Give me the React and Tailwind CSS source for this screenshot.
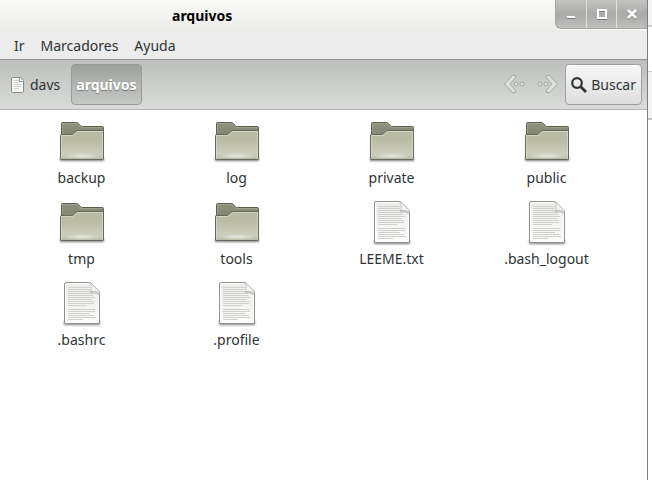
import React from 'react';

const entries = [
  { name: 'backup', type: 'folder' },
  { name: 'log', type: 'folder' },
  { name: 'private', type: 'folder' },
  { name: 'public', type: 'folder' },
  { name: 'tmp', type: 'folder' },
  { name: 'tools', type: 'folder' },
  { name: 'LEEME.txt', type: 'file' },
  { name: '.bash_logout', type: 'file' },
  { name: '.bashrc', type: 'file' },
  { name: '.profile', type: 'file' },
];

// y and length of each text line on the document icon
const textLines = [
  [7, 22], [9, 22], [11, 23], [13, 25], [15, 25], [17, 27], [19, 24], [21, 26], [23, 26], [25, 19],
  [29, 27], [31, 27], [33, 22], [35, 26], [37, 28], [39, 15],
];

const Gradients = () => (
  <svg className="absolute" width="0" height="0" aria-hidden="true">
    <defs>
      <linearGradient id="folderBack" x1="0" y1="0" x2="0" y2="1">
        <stop offset="0" stopColor="#8f927d" />
        <stop offset="1" stopColor="#7c7f6b" />
      </linearGradient>
      <linearGradient id="folderFront" x1="0" y1="0" x2="0" y2="1">
        <stop offset="0" stopColor="#b9bba5" />
        <stop offset="0.35" stopColor="#babca6" />
        <stop offset="0.8" stopColor="#cccebc" />
        <stop offset="1" stopColor="#b8baa6" />
      </linearGradient>
      <radialGradient id="folderGlow">
        <stop offset="0" stopColor="#fff" stopOpacity="0.6" />
        <stop offset="1" stopColor="#fff" stopOpacity="0" />
      </radialGradient>
      <linearGradient id="paper" x1="0" y1="0" x2="0" y2="1">
        <stop offset="0" stopColor="#ececea" />
        <stop offset="1" stopColor="#fafaf9" />
      </linearGradient>
      <linearGradient id="fold" x1="0" y1="1" x2="1" y2="0">
        <stop offset="0" stopColor="#fff" />
        <stop offset="0.5" stopColor="#f2f2f0" />
        <stop offset="1" stopColor="#d4d4d2" />
      </linearGradient>
      <filter id="soft" x="-20%" y="-100%" width="140%" height="300%">
        <feGaussianBlur stdDeviation="1" />
      </filter>
    </defs>
  </svg>
);

const FolderIcon = () => (
  <svg width="48" height="48" viewBox="0 0 48 48" aria-hidden="true">
    <path d="M2 40h44v3H2z" fill="#000" fillOpacity="0.5" filter="url(#soft)" />
    <path d="M3.500 24V5.500q0-1 1-1h14q1 0 1.600.8l2.400 2.400q.8.8 1.800.8h20.200q1 0 1 1V24z" fill="url(#folderBack)" stroke="#5c5f4e" />
    <path d="M4.500 15V5.500h14l3.500 3.200q.8.8 1.800.8h20.700" fill="none" stroke="#a9ac98" strokeOpacity="0.6" />
    <path d="M2.500 41V17.500q0-1 1-1h10.300q1 0 1.800-.8l2.600-2.600q.7-.6 1.700-.6h24.600q1 0 1 1V41q0 .5-.7.5H3.200q-.7 0-.7-.5z" fill="url(#folderFront)" stroke="#65685a" />
    <path d="M3.500 40.500v-23h10.800q1 0 1.800-.8l2.600-2.600q.6-.6 1.600-.6h24.200v27" fill="none" stroke="#d8dacb" strokeOpacity="0.8" />
    <ellipse cx="24" cy="38" rx="20" ry="3" fill="url(#folderGlow)" />
  </svg>
);

const FileIcon = () => (
  <svg width="48" height="48" viewBox="0 0 48 48" aria-hidden="true">
    <path d="M6 41h36v4H6z" fill="#000" fillOpacity="0.5" filter="url(#soft)" />
    <path d="M8 2.500h22.500q2 0 3.600 1.600l5.800 5.800q1.600 1.600 1.600 3.600V42q0 1.500-1.500 1.500H8q-1.500 0-1.500-1.500V4q0-1.500 1.500-1.500z" fill="url(#paper)" stroke="#90908b" />
    <path d="M8.500 3.500h22q1.500 0 3 1.400l5.600 5.600q1.400 1.500 1.400 3v28q0 1-1 1h-31q-1 0-1-1v-37q0-1 1-1z" fill="none" stroke="#fff" />
    {textLines.map(([y, width]) => (
      <path key={y} d={`M10 ${y + 0.5}h${width}`} stroke="#d0d0ce" />
    ))}
    <path d="M32 12.500c3.500-.5 6.500-.2 9 2" fill="none" stroke="#000" strokeOpacity="0.15" strokeWidth="2" />
    <path d="M31 3c2.400.8 2.500 3.200 2 8.500 4.500-.5 7.400.1 8.300 3 .4-2-.2-3.600-1.600-5l-4.800-4.900C33.700 3.400 32.500 3 31 3z" fill="url(#fold)" stroke="#a8a8a4" strokeWidth="0.6" />
  </svg>
);

const SmallFileIcon = () => (
  <svg width="16" height="16" viewBox="0 0 16 16" aria-hidden="true">
    <path d="M3 .5h7.500l3 3V14q0 1.500-1 1.500H3q-1.500 0-1.500-1V2Q1.500.5 3 .5z" fill="#f6f6f5" stroke="#8b8d89" />
    <path d="M4 3.500h5M4 5.500h6M4 7.500h7M4 9.500h7M4 11.500h5" stroke="#d2d3d1" />
    <path d="M9.500 1v3.500H13" fill="#fff" stroke="#a3a4a1" />
  </svg>
);

const ArrowIcon = ({ forward }) => (
  <svg width="22" height="22" viewBox="0 0 22 22" className={forward ? '-scale-x-100' : ''} aria-hidden="true">
    <path d="M2 19.500h10" stroke="#000" strokeOpacity="0.25" strokeWidth="2" filter="url(#soft)" />
    <path d="M9.500 1.500h3l.5 1.500-6 7 6 7-.5 1.500h-3L1.500 10z" fill="#dfe1de" stroke="#a4a7a3" strokeLinejoin="round" />
    <circle cx="13" cy="10" r="2" fill="#dfe1de" stroke="#a4a7a3" />
    <circle cx="19" cy="10" r="2" fill="#dfe1de" stroke="#a4a7a3" />
  </svg>
);

const SearchIcon = () => (
  <svg width="16" height="16" viewBox="0 0 16 16" fill="none" stroke="#2e3436" aria-hidden="true">
    <circle cx="6" cy="6" r="4.800" strokeWidth="2.200" />
    <path d="M9.500 9.500l5.500 5.500" strokeWidth="2.800" />
  </svg>
);

const WindowControls = () => (
  <div className="flex h-[29px] w-[92px] overflow-hidden rounded-bl-md border-b border-l border-[#a3a3a1] bg-linear-to-b from-[#c4c4c2] via-[#a9a9a7] to-[#c0c0be] drop-shadow-[0_1px_0_#fff]">
    <button aria-label="Minimizar" className="flex flex-1 items-center justify-center border-r border-[#e0e0de]">
      <svg width="10" height="10" viewBox="0 0 10 10" className="drop-shadow-[0_1px_0_#777]">
        <path d="M1 7h8v2H1z" fill="#fff" />
      </svg>
    </button>
    <button aria-label="Maximizar" className="flex flex-1 items-center justify-center border-r border-[#e0e0de]">
      <svg width="10" height="10" viewBox="0 0 10 10" className="drop-shadow-[0_1px_0_#777]">
        <path d="M1 1h8v8H1z" fill="none" stroke="#fff" strokeWidth="2" />
      </svg>
    </button>
    <button aria-label="Cerrar" className="flex flex-1 items-center justify-center">
      <svg width="10" height="10" viewBox="0 0 10 10" className="drop-shadow-[0_1px_0_#777]">
        <path d="M1 1l8 8M9 1L1 9" stroke="#fff" strokeWidth="2.600" />
      </svg>
    </button>
  </div>
);

const TitleBar = () => (
  <header className="flex h-8 items-start bg-linear-to-b from-[#f9f9f8] to-[#ececeb]">
    <h1 className="flex-1 pl-[172px] text-sm leading-8 font-bold text-black">arquivos</h1>
    <WindowControls />
  </header>
);

const MenuBar = () => (
  <nav className="flex h-[27px] items-center gap-4 bg-[#ececec] px-[14px]">
    <button>Ir</button>
    <button>Marcadores</button>
    <button>Ayuda</button>
  </nav>
);

const Toolbar = () => (
  <div className="flex h-[51px] items-center border-t border-b border-t-[#919490] border-b-[#b3b6b2] bg-linear-to-b from-[#bcbfbb] to-[#dadcd9] pr-[5px] pl-[10px]">
    <button className="flex items-center gap-1">
      <SmallFileIcon />
      davs
    </button>
    <button className="ml-[11px] h-[41px] rounded-sm border border-[#999c98] bg-linear-to-b from-[#9fa19e] to-[#c6c8c5] px-1 font-bold text-white [text-shadow:0_1px_1px_#777]">
      arquivos
    </button>
    <div className="ml-auto flex gap-3">
      <button aria-label="Atrás"><ArrowIcon /></button>
      <button aria-label="Adelante"><ArrowIcon forward /></button>
    </div>
    <button className="ml-[6px] flex h-[41px] items-center gap-1 rounded-sm border border-[#9da09c] bg-linear-to-b from-[#f7f7f7] to-[#dedede] px-[5px] shadow-[inset_0_1px_0_#fff]">
      <SearchIcon />
      Buscar
    </button>
  </div>
);

const App = () => (
  <div className="flex min-h-screen bg-white font-['Noto_Sans',sans-serif] text-sm text-[#2e3436]">
    <Gradients />
    <div className="flex flex-1 flex-col border-r border-[#7c7c7c]">
      <TitleBar />
      <MenuBar />
      <Toolbar />
      <main className="grid grid-cols-[repeat(auto-fill,155px)] pt-2 pl-1">
        {entries.map(({ name, type }) => (
          <button key={name} className="flex h-[81px] flex-col items-center">
            {type === 'folder' ? <FolderIcon /> : <FileIcon />}
            <span className="mt-0.5 leading-5">{name}</span>
          </button>
        ))}
      </main>
    </div>
    <div className="w-1 bg-white">
      <div className="h-[27px] border-b-2 border-[#d0d0d0] bg-[#f4f4f4]" />
      <div className="h-[45px] border-b border-[#d0d0d0]" />
      <div className="h-[48px] border-b-2 border-[#c4c4c4] bg-[#f4f4f4]" />
    </div>
  </div>
);

export default App;
